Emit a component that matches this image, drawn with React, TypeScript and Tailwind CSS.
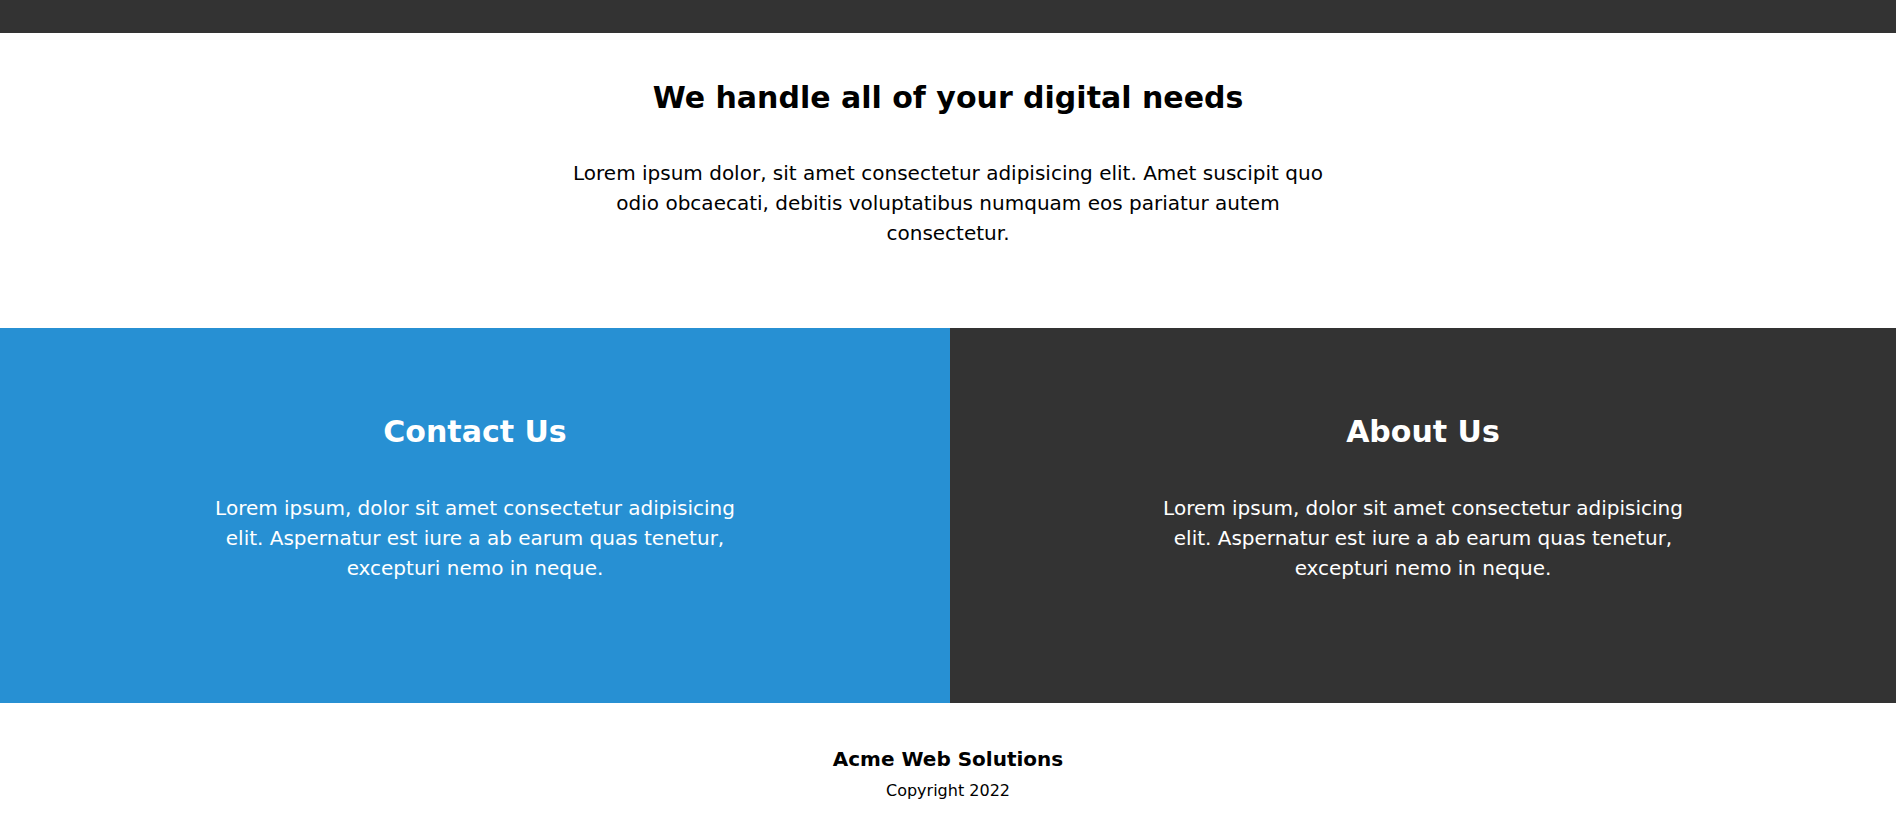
export default function App() {
  return (
    <div className="min-h-[837px] bg-white font-['DejaVu_Sans',Verdana,sans-serif]">
      <div className="h-[33px] bg-[#333333]" />
      <section className="flex flex-col items-center pt-[47px] pb-[80px] text-black">
        <h1 className="text-[30px] font-bold leading-[36px]">We handle all of your digital needs</h1>
        <p className="mt-[42px] w-[770px] text-center text-[20px] leading-[30px]">
          Lorem ipsum dolor, sit amet consectetur adipisicing elit. Amet suscipit quo odio obcaecati, debitis voluptatibus numquam eos pariatur autem consectetur.
        </p>
      </section>
      <section className="grid grid-cols-[950px_1fr] text-white">
        <div className="flex h-[375px] flex-col items-center bg-[#2790d3] pt-[86px]">
          <h2 className="text-[30px] font-bold leading-[36px]">Contact Us</h2>
          <p className="mt-[43px] w-[540px] text-center text-[20px] leading-[30px]">
            Lorem ipsum, dolor sit amet consectetur adipisicing elit. Aspernatur est iure a ab earum quas tenetur, excepturi nemo in neque.
          </p>
        </div>
        <div className="flex h-[375px] flex-col items-center bg-[#333333] pt-[86px]">
          <h2 className="text-[30px] font-bold leading-[36px]">About Us</h2>
          <p className="mt-[43px] w-[540px] text-center text-[20px] leading-[30px]">
            Lorem ipsum, dolor sit amet consectetur adipisicing elit. Aspernatur est iure a ab earum quas tenetur, excepturi nemo in neque.
          </p>
        </div>
      </section>
      <footer className="flex flex-col items-center pt-[41px] text-black">
        <div className="text-[20px] font-bold leading-[30px]">Acme Web Solutions</div>
        <div className="mt-[2px] text-[16px] leading-[30px]">Copyright 2022</div>
      </footer>
    </div>
  );
}
